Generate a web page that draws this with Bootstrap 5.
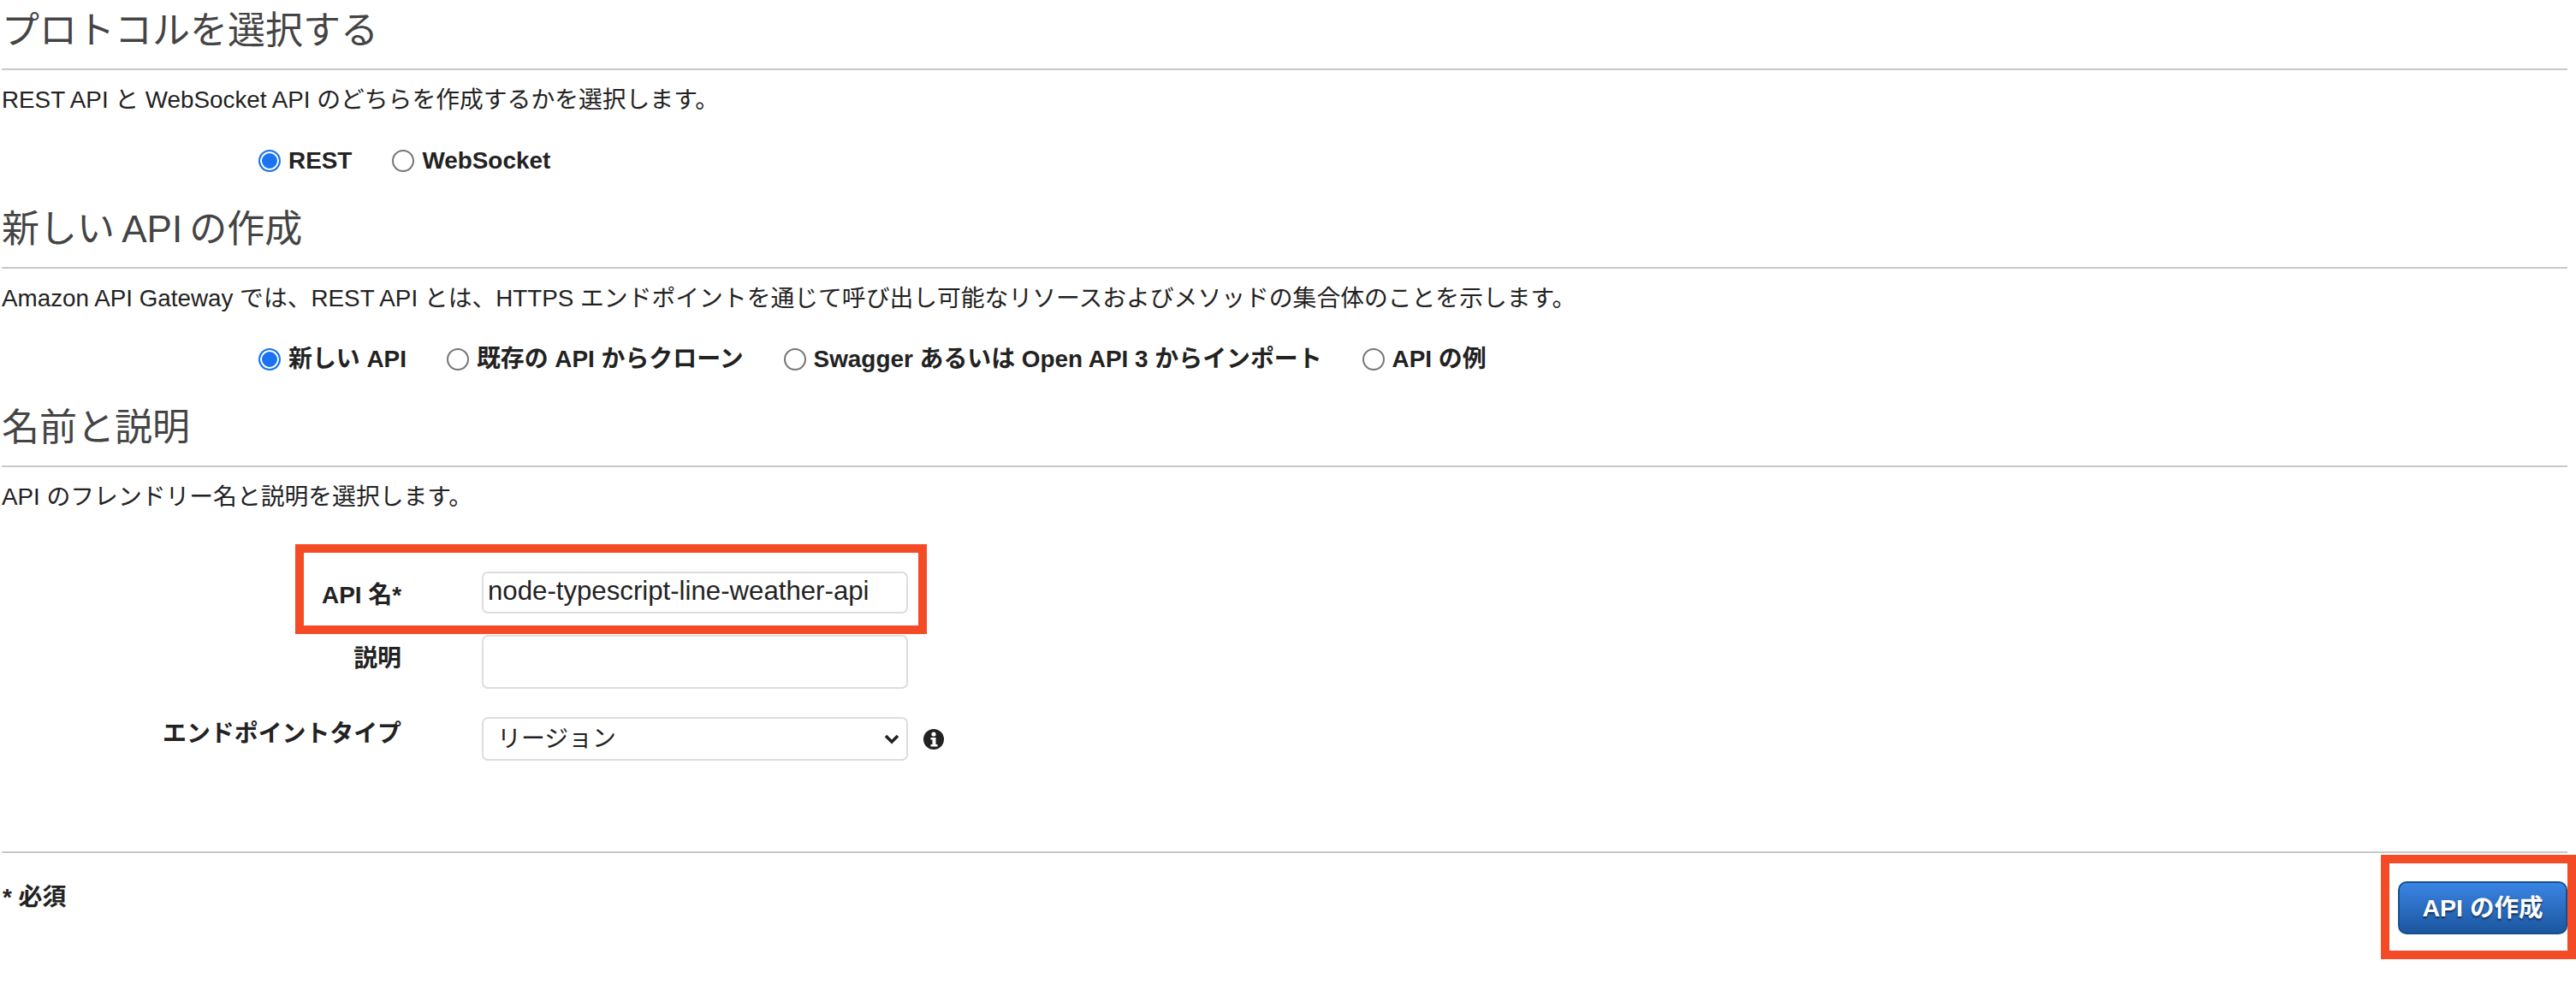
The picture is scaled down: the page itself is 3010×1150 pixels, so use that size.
<!DOCTYPE html>
<html lang="ja">
<head>
<meta charset="utf-8">
<title>API の作成</title>
<link href="https://cdn.jsdelivr.net/npm/bootstrap@5.3.0/dist/css/bootstrap.min.css" rel="stylesheet">
<style>
html, body { height: 100%; }
body { background: #fff; color: #222; font-family: "Liberation Sans", "Noto Sans CJK JP", sans-serif; font-size: 27.9px; line-height: 36px; overflow: hidden; }
.page-wrap { padding: 0 10px 0 2px; }
.sec-block { height: 232px; }
.sec-title { font-size: 44px; line-height: 50px; font-weight: 400; color: #444; margin: 0; padding: 11px 0 19px; border-bottom: 2px solid #c8c8c8; word-spacing: -4px; }
.sec-desc { margin: 17px 0 0; padding-left: 0; font-size: 27.8px; }
.radio-row { margin-top: 38px; padding-left: 300px; height: 30px; gap: 47px; }
.radio-opt { gap: 9px; font-weight: 700; margin: 0; line-height: 30px; }
.radio-opt input { appearance: none; width: 26px; height: 26px; margin: 0; border: 2.5px solid #767676; border-radius: 50%; background: #fff; flex: none; }
.radio-opt input:checked { border-color: #1a73f0; background: #1a73f0; box-shadow: inset 0 0 0 2px #fff; }
.form-zone { margin-top: 69px; height: 327px; }
.field-row { gap: 94px; position: relative; }
.field-row + .field-row { margin-top: 25px; }
.field-row.third { margin-top: 33px; }
.field-label { width: 467px; text-align: right; font-weight: 700; margin: 0; padding-top: 10px; flex: none; }
.field-label.lbl-desc { padding-top: 10px; }
.field-label.lbl-type { padding-top: 2px; }
.field-input.form-control, .field-input.form-select { width: 498px; flex: none; color: #222; border: 2px solid #ddd; border-radius: 7px; box-shadow: none; }
.field-input.form-control { font-size: 31.2px; padding: 0 5px 3px; }
.field-name { height: 49px; }
.field-desc { height: 63px; }
.field-input.form-select { height: 51px; font-size: 27.9px; padding: 0 40px 0 16px; background-image: url("data:image/svg+xml,%3csvg xmlns='http://www.w3.org/2000/svg' viewBox='0 0 18 12'%3e%3cpath fill='none' stroke='%23222' stroke-width='3.6' d='M2 2l7 7 7-7'/%3e%3c/svg%3e"); background-size: 18px 12px; background-position: right 8px center; }
.info-mark { width: 24px; height: 24px; margin: 14px 0 0 -76px; flex: none; }
.mark-box { position: absolute; border: 10px solid #f44b26; pointer-events: none; }
.mark-name { left: 343px; top: -32px; width: 738px; height: 105px; }
.foot-bar { border-top: 2px solid #c8c8c8; height: 96px; position: relative; }
.req-note { font-weight: 700; padding-top: 34px; padding-left: 1px; }
.make-btn.btn { width: 198px; height: 62px; margin-top: 33px; padding: 0; font-size: 28.5px; font-weight: 700; color: #fff; border: 2px solid #15508e; border-radius: 10px; background: linear-gradient(#3a85e4, #1c569f); text-shadow: 0 2px 2px rgba(0,0,0,.55); line-height: 1; }
.mark-btn { right: -10px; top: 2px; width: 228px; height: 122px; }
</style>
</head>
<body>
<div class="page-wrap">
  <section class="sec-block">
    <h2 class="sec-title">プロトコルを選択する</h2>
    <p class="sec-desc">REST API と WebSocket API のどちらを作成するかを選択します。</p>
    <div class="radio-row d-flex align-items-center">
      <label class="radio-opt d-flex align-items-center"><input type="radio" name="proto" checked>REST</label>
      <label class="radio-opt d-flex align-items-center"><input type="radio" name="proto">WebSocket</label>
    </div>
  </section>
  <section class="sec-block">
    <h2 class="sec-title">新しい API の作成</h2>
    <p class="sec-desc">Amazon API Gateway では、REST API とは、HTTPS エンドポイントを通じて呼び出し可能なリソースおよびメソッドの集合体のことを示します。</p>
    <div class="radio-row d-flex align-items-center">
      <label class="radio-opt d-flex align-items-center"><input type="radio" name="kind" checked>新しい API</label>
      <label class="radio-opt d-flex align-items-center"><input type="radio" name="kind">既存の API からクローン</label>
      <label class="radio-opt d-flex align-items-center"><input type="radio" name="kind">Swagger あるいは Open API 3 からインポート</label>
      <label class="radio-opt d-flex align-items-center"><input type="radio" name="kind">API の例</label>
    </div>
  </section>
  <section>
    <h2 class="sec-title">名前と説明</h2>
    <p class="sec-desc">API のフレンドリー名と説明を選択します。</p>
    <div class="form-zone">
      <div class="field-row d-flex align-items-start">
        <label class="field-label">API 名*</label>
        <input class="form-control field-input field-name" type="text" value="node-typescript-line-weather-api">
        <div class="mark-box mark-name"></div>
      </div>
      <div class="field-row d-flex align-items-start">
        <label class="field-label lbl-desc">説明</label>
        <input class="form-control field-input field-desc" type="text">
      </div>
      <div class="field-row third d-flex align-items-start">
        <label class="field-label lbl-type">エンドポイントタイプ</label>
        <select class="form-select field-input"><option>リージョン</option></select>
        <svg class="info-mark" viewBox="0 0 24 24" role="img" aria-label="情報">
          <circle cx="12" cy="12" r="12" fill="#222"/>
          <circle cx="12" cy="6" r="2.6" fill="#fff"/>
          <path fill="#fff" d="M8.5 10h6v8h2v2.5h-8V18h2v-5.5h-2z"/>
        </svg>
      </div>
    </div>
    <div class="foot-bar d-flex justify-content-between align-items-start">
      <div class="req-note">* 必須</div>
      <button class="btn make-btn" type="button">API の作成</button>
      <div class="mark-box mark-btn"></div>
    </div>
  </section>
</div>
<script src="https://cdn.jsdelivr.net/npm/bootstrap@5.3.0/dist/js/bootstrap.bundle.min.js"></script>
</body>
</html>
